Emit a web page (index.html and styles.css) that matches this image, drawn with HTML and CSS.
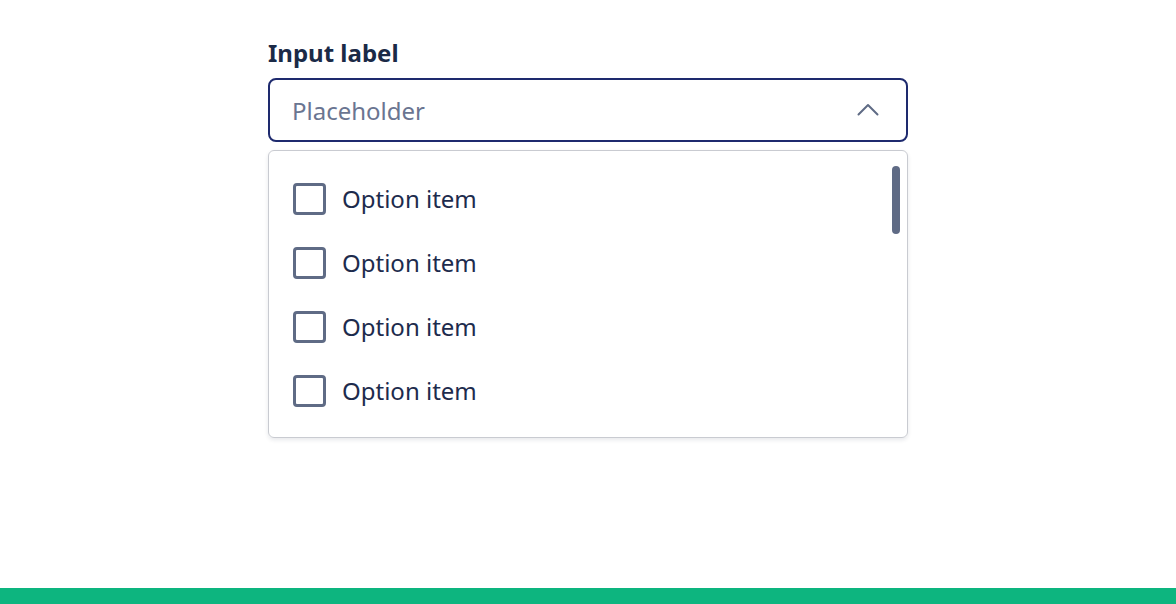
FILE: index.html
```html
<!DOCTYPE html>
<html lang="en">
<head>
<meta charset="utf-8">
<title>Select</title>
<link rel="stylesheet" href="styles.css">
</head>
<body>
<div class="page">
  <main class="main">
    <div class="field">
      <label class="label">Input label</label>
      <div class="input">
        <span class="placeholder">Placeholder</span>
        <svg class="chevron" width="24" height="24" viewBox="0 0 24 24" fill="none"><path d="M2.5 16.5 L12 7 L21.5 16.5" stroke="#5f6b85" stroke-width="2" stroke-linecap="round" stroke-linejoin="round"/></svg>
      </div>
      <div class="dropdown">
        <ul class="options">
          <li class="option"><span class="box"></span><span class="text">Option item</span></li>
          <li class="option"><span class="box"></span><span class="text">Option item</span></li>
          <li class="option"><span class="box"></span><span class="text">Option item</span></li>
          <li class="option"><span class="box"></span><span class="text">Option item</span></li>
        </ul>
        <div class="thumb"></div>
      </div>
    </div>
  </main>
  <div class="bar"></div>
</div>
</body>
</html>
```

FILE: styles.css
```css
* { box-sizing: border-box; }
html, body { margin: 0; padding: 0; background: #ffffff; }
body { font-family: "Noto Sans", "Open Sans", sans-serif; }
.page { min-height: 100vh; display: flex; flex-direction: column; }
.main { flex: 1; display: flex; justify-content: center; padding-top: 37px; }
.field { width: 640px; display: flex; flex-direction: column; }
.label { font-size: 24px; line-height: 32px; font-weight: 700; color: #1b2a47; margin-bottom: 9px; }
.input {
  height: 64px;
  border: 2px solid #1e2a6e;
  border-radius: 8px;
  display: flex;
  align-items: center;
  justify-content: space-between;
  padding: 2px 26px 0 22px;
}
.placeholder { font-size: 24px; line-height: 32px; color: #6a7591; }
.chevron { display: block; margin-top: -2px; }
.dropdown {
  position: relative;
  margin-top: 8px;
  height: 288px;
  border: 1px solid #c9cbd1;
  border-radius: 6px;
  box-shadow: 0 2px 4px rgba(20, 30, 60, 0.10);
  overflow: hidden;
}
.options { list-style: none; margin: 0; padding: 16px 0 0 24px; }
.option { height: 64px; display: flex; align-items: center; gap: 16px; }
.box {
  width: 33px; height: 32px;
  border: 3px solid #5f6b85;
  border-radius: 4px;
  flex: none;
}
.text { font-size: 24px; line-height: 32px; color: #1d2b4d; }
.thumb {
  position: absolute;
  top: 15px; right: 7px;
  width: 8px; height: 68px;
  border-radius: 4px;
  background: #5f6b85;
}
.bar { height: 16px; background: #0db57f; }
```
